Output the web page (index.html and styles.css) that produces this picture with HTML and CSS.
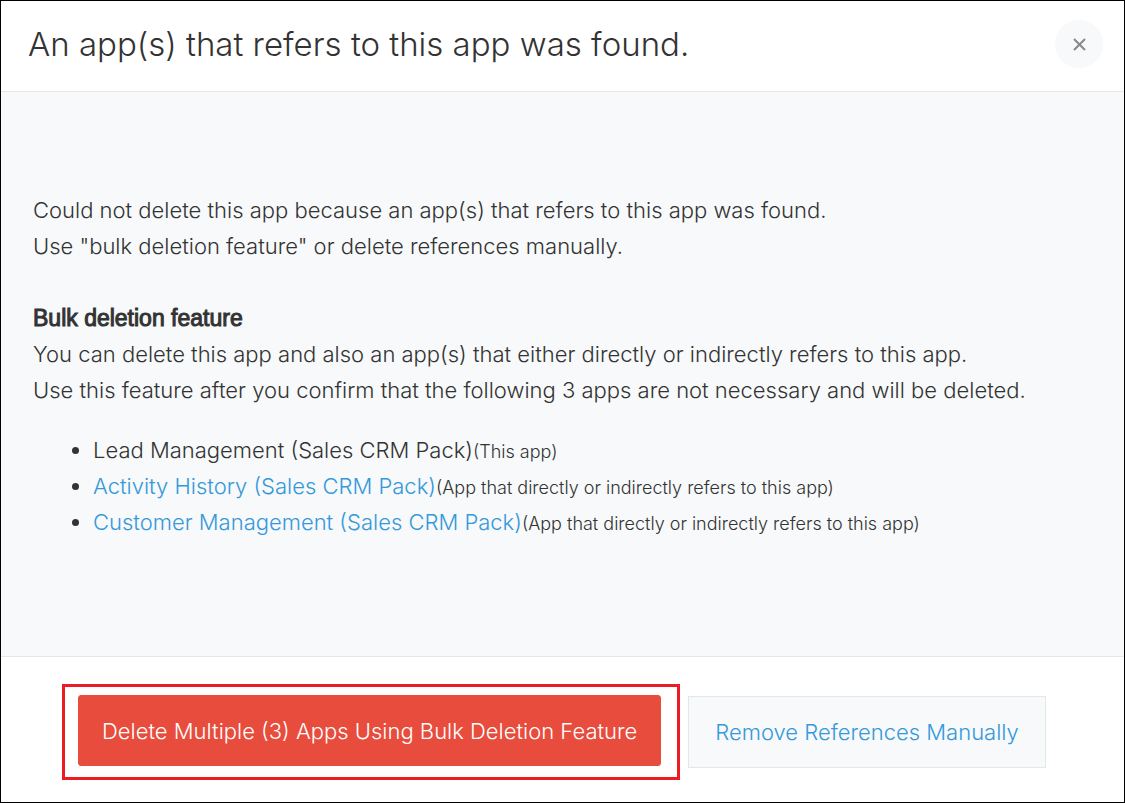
FILE: index.html
```html
<!DOCTYPE html>
<html lang="en">
<head>
<meta charset="utf-8">
<title>An app(s) that refers to this app was found.</title>
<link rel="stylesheet" href="styles.css">
</head>
<body>
<main class="dialog" role="dialog" aria-labelledby="dialog-title">
  <header class="dialog-header">
    <h1 class="dialog-title" id="dialog-title">An app(s) that refers to this app was found.</h1>
    <button class="close" type="button" aria-label="Close">
      <svg class="close-icon" viewBox="0 0 14 14" aria-hidden="true"><path d="M2 2 13 13M13 2 2 13"/></svg>
    </button>
  </header>
  <section class="dialog-body">
    <p class="text">Could not delete this app because an app(s) that refers to this app was found.<br>Use "bulk deletion feature" or delete references manually.</p>
    <h2 class="subtitle">Bulk deletion feature</h2>
    <p class="text">You can delete this app and also an app(s) that either directly or indirectly refers to this app.<br>Use this feature after you confirm that the following 3 apps are not necessary and will be deleted.</p>
    <ul class="apps">
      <li class="app">Lead Management (Sales CRM Pack)<span class="note">(This app)</span></li>
      <li class="app"><a class="link" href="#">Activity History (Sales CRM Pack)</a><span class="note">(App that directly or indirectly refers to this app)</span></li>
      <li class="app"><a class="link" href="#">Customer Management (Sales CRM Pack)</a><span class="note">(App that directly or indirectly refers to this app)</span></li>
    </ul>
  </section>
  <footer class="dialog-footer">
    <div class="highlight"><button class="button danger" type="button">Delete Multiple (3) Apps Using Bulk Deletion Feature</button></div>
    <button class="button plain" type="button">Remove References Manually</button>
  </footer>
</main>
</body>
</html>
```
FILE: styles.css
```css
* { box-sizing: border-box; }
body {
  margin: 0;
  font-family: Inter, "Liberation Sans", Arial, sans-serif;
  font-weight: 300;
  color: #333;
}
.dialog {
  display: flex;
  flex-direction: column;
  min-height: 100vh;
  border: 1px solid #000;
  background: #fff;
}
.dialog-header {
  display: flex;
  align-items: center;
  justify-content: space-between;
  padding: 19px 21px 23px 27px;
  border-bottom: 1px solid #e3e7e8;
}
.dialog-title {
  margin: 0;
  font-size: 33px;
  line-height: 48px;
  font-weight: 300;
}
.close {
  display: grid;
  place-items: center;
  width: 48px;
  height: 48px;
  padding: 0;
  border: 0;
  border-radius: 50%;
  background: #f7f9fa;
}
.close-icon {
  width: 14px;
  height: 14px;
  fill: none;
  stroke: #888;
  stroke-width: 2;
}
.dialog-body {
  flex: 1;
  padding: 100px 32px;
  background: #f7f9fa;
  border-bottom: 1px solid #e3e7e8;
}
.text, .subtitle {
  margin: 0;
  font-size: 22px;
  line-height: 36px;
}
.subtitle {
  margin-top: 36px;
  font-family: "Liberation Sans", Arial, sans-serif;
  font-size: 23px;
  font-weight: 400;
  -webkit-text-stroke: 1px #333;
}
.apps {
  margin: 24px 0 0;
  padding-left: 60px;
  font-size: 22px;
  line-height: 36px;
}
.note { font-size: 18px; line-height: 24px; }
.link { color: #3498db; text-decoration: none; }
.dialog-footer {
  display: flex;
  align-items: center;
  gap: 8px;
  padding: 27px 61px 22px;
}
.highlight { padding: 8px 16px 11px 13px; border: 3px solid #ed1c24; }
.button {
  height: 71px;
  border: 1px solid #e3e7e8;
  font-family: inherit;
  font-size: 22px;
  font-weight: 300;
  white-space: nowrap;
}
.danger { padding: 0 23px; border-color: #e74c3c; border-radius: 3px; background: #e74c3c; color: #fff; }
.plain { height: 72px; padding: 0 26px; background: #f7f9fa; color: #3498db; }
```
